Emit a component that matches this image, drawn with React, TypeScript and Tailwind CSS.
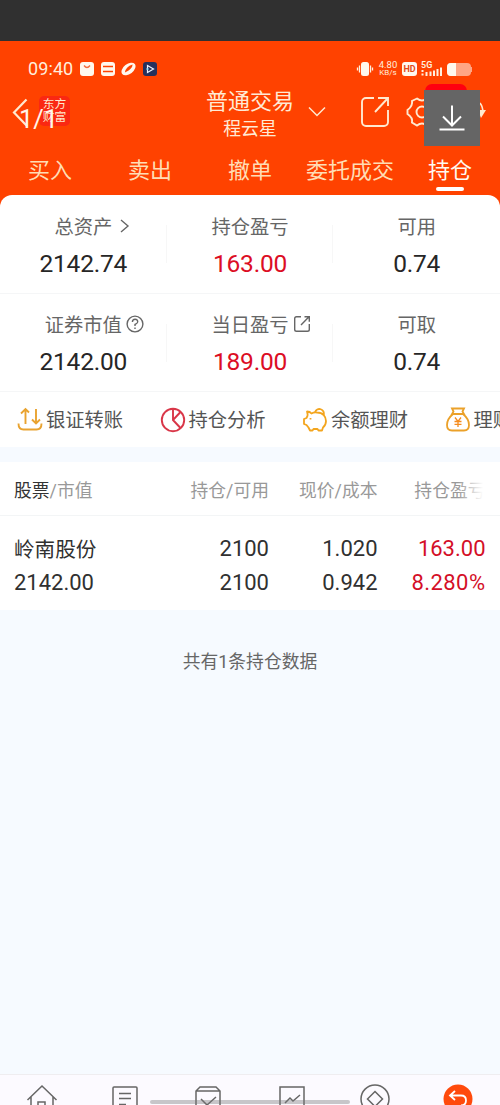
import React from "react";

const cream = "#ffe9cf";

function StatusBar() {
  return (
    <div className="flex h-[56px] items-center pl-[28px] pr-[28px] text-[#ffeedd]">
      <span className="w-[52px] text-[18px] leading-[20px] tracking-[0.1px]">09:40</span>
      <svg width="78" height="16" viewBox="0 0 78 16" fill="none">
        <rect x="0" y="1" width="14" height="14" rx="3" fill="#fff8ee" />
        <path d="M4 4.500q3 4 6 0" stroke="#f26a3d" strokeWidth="1.300" />
        <rect x="21" y="1" width="14" height="14" rx="3" fill="#fff8ee" />
        <path d="M23 5.500h10M23 10.500h10" stroke="#ff4200" strokeWidth="1.300" />
        <g transform="rotate(-38 48.500 8)">
          <ellipse cx="48.500" cy="8" rx="8" ry="5" fill="#fff8ee" />
          <path d="M43.500 8.500q4-4 11-1.500q-3 3.500-11 1.500z" fill="#ff4200" />
        </g>
        <rect x="63" y="1" width="14" height="14" rx="3" fill="#26305c" />
        <path d="M67.500 4.500l6 3.500-6 3.500z" stroke="#eef3ff" strokeWidth="1.200" />
        <path d="M66 8h3" stroke="#65c8e8" />
      </svg>
      <div className="flex-1" />
      <svg width="18" height="16" viewBox="0 0 18 16">
        <rect x="5" y="1" width="8" height="14" rx="2.500" fill="#fff8ee" />
        <path d="M3.500 4.500v7M14.500 4.500v7M1.500 6.500v3M16.500 6.500v3" stroke="#fff0df" strokeWidth="1.300" />
      </svg>
      <div className="ml-[4px] w-[20px] text-center text-[9.500px] leading-[8px]">
        <div className="whitespace-nowrap">4.80</div>
        <div className="whitespace-nowrap text-[8px]">KB/s</div>
      </div>
      <div className="ml-[4px] h-[14px] w-[15px] rounded-[3px] bg-[#fff8ee] text-center text-[9px] font-bold leading-[14px] text-[#e24a18]">
        HD
      </div>
      <svg className="ml-[4px]" width="22" height="16" viewBox="0 0 22 16">
        <text x="0" y="7" fontSize="9" fontWeight="600" fill="#fff0df">5G</text>
        <path d="M1.500 9v2M1.500 12.500v2M5.500 11v4M9.500 10.500v4.500M13 9.500v5.500M16.500 8v7M20 6.500v8.500" stroke="#fff0df" strokeWidth="2" />
      </svg>
      <div className="ml-[4px] flex h-[13px] w-[24px] overflow-hidden rounded-[4px] bg-[#ffa584]">
        <div className="w-[9px] bg-[#fff8ee]" />
      </div>
      <div className="h-[5px] w-[1px] bg-[#ffa584]" />
    </div>
  );
}

function TitleBar() {
  return (
    <div className="relative flex h-[53px] pl-[12px]">
      <svg className="mt-px" width="18" height="30" viewBox="0 0 18 30" fill="none">
        <path d="M14.500 1.500L2 14.500 15 28" stroke={cream} strokeWidth="2.200" />
      </svg>
      <div className="ml-[9px] -mt-px h-[30px] w-[31px] rounded-[5px] bg-[#fa2812] pt-[2px] text-center text-[11.800px] leading-[13px] text-[#ffe9cf]">
        <div>东方</div>
        <div>财富</div>
      </div>
      <div className="absolute left-[19px] top-[7px] whitespace-nowrap text-[25.500px] leading-[30px] text-[#fff5e9]">1/1</div>
      <div className="ml-[136px] w-[88px] text-center text-[#ffead5]">
        <div className="-mt-px h-[28px] whitespace-nowrap text-[22px] leading-[10px]">
          <span className="block pt-[1px]">普通交易</span>
        </div>
        <div className="text-[17.800px] leading-[10px]">程云星</div>
      </div>
      <svg className="ml-[14px] mt-[9px]" width="18" height="12" viewBox="0 0 18 12" fill="none">
        <path d="M1 1.500l8 8 8-8" stroke={cream} strokeWidth="1.500" />
      </svg>
      <svg className="ml-[34px] -mt-px" width="30" height="32" viewBox="0 0 30 32" fill="none" stroke={cream} strokeWidth="1.900">
        <path d="M14 2H6a4 4 0 00-4 4v20a4 4 0 004 4h18a4 4 0 004-4V14M15 16L28 2M18 2h10v8" />
      </svg>
      <svg className="ml-[15px] -mt-px" width="34" height="34" viewBox="0 0 34 34" fill="none" stroke={cream} strokeWidth="1.900">
        <path d="M12 2.500q5 4 10 0l5 2q0 6 5 8v6q-5 2-5 8l-5 3q-5-4-10 0l-5-3q1-5-4.500-8.500v-4Q8 10 7 5z" />
        <circle cx="17" cy="16" r="5.500" />
      </svg>
      <svg className="absolute left-[476px] top-[3px]" width="12" height="28" viewBox="0 0 12 28" fill="none">
        <path d="M4 3q3 4 3 10" stroke={cream} strokeWidth="1.600" />
        <path d="M2 10h8l-5 8z" fill={cream} />
      </svg>
      <div className="absolute left-[425px] top-[-13px] h-[16px] w-[42px] rounded-[7px] bg-[#ff0010]" />
      <div className="absolute left-[424px] top-[-7px] flex h-[56px] w-[56px] items-center justify-center bg-[#656565]">
        <svg width="28" height="28" viewBox="0 0 28 28" fill="none" stroke="#fff" strokeWidth="2">
          <path d="M14 1.500v20M5 12.500l9 9 9-9M1.500 25.500h25" />
        </svg>
      </div>
    </div>
  );
}

const tabs = ["买入", "卖出", "撤单", "委托成交", "持仓"];

function Tabs() {
  return (
    <div className="grid h-[45px] grid-cols-5">
      {tabs.map((t, i) => (
        <div key={t} className="flex flex-col items-center">
          <span
            className={
              i === 4
                ? "h-[37px] whitespace-nowrap text-[22px] leading-[41px] text-[#fffaf2]"
                : "h-[37px] whitespace-nowrap text-[22px] leading-[41px] text-[#ffddb5]"
            }
          >
            {t}
          </span>
          {i === 4 && <span className="h-[4px] w-[28px] rounded-full bg-white" />}
        </div>
      ))}
    </div>
  );
}

type StatProps = { label: string; value: string; red?: boolean; icon?: React.ReactNode };

function Stat({ label, value, red, icon }: StatProps) {
  return (
    <div className="flex flex-col items-center">
      <div className="relative h-[28px] whitespace-nowrap pt-[2px] text-[19.300px] leading-[28px] text-[#666]">
        {label}
        {icon && <div className="absolute left-full top-0 flex h-[28px] items-center">{icon}</div>}
      </div>
      <div className={red ? "mt-[9px] text-[24.500px] leading-[30px] tracking-[-0.2px] text-[#dc0d24]" : "mt-[9px] text-[24.500px] leading-[30px] tracking-[-0.2px] text-[#262626]"}>
        {value}
      </div>
    </div>
  );
}

const chevron = (
  <svg className="ml-[7px]" width="12" height="16" viewBox="0 0 12 16" fill="none" stroke="#666" strokeWidth="1.400">
    <path d="M2 2l7 6-7 6" />
  </svg>
);
const question = (
  <svg className="ml-[4px]" width="18" height="18" viewBox="0 0 18 18" fill="none" stroke="#666" strokeWidth="1.400">
    <circle cx="9" cy="9" r="7.900" />
    <path d="M6.400 7q0-2.800 2.700-2.800T11.700 7Q11.500 8.300 9 9.500v1.500M9 12.500v1.500" />
  </svg>
);
const share = (
  <svg className="ml-[4px]" width="18" height="18" viewBox="0 0 18 18" fill="none" stroke="#666" strokeWidth="1.400">
    <path d="M8 1.700H3.500A1.800 1.800 0 001.700 3.500v11a1.800 1.800 0 001.800 1.800h11a1.800 1.800 0 001.800-1.800V9M8 10l8-8.300M11.500 1.700h4.800v5" />
  </svg>
);

function Row({ children }: { children: React.ReactNode }) {
  return <div className="grid grid-cols-3 border-b border-[#f5f6f7]">{children}</div>;
}

function Divider() {
  return <div className="absolute right-0 top-[30px] h-[38px] w-px bg-[#f7f7f7]" />;
}

const transferIcon = (
  <svg width="26" height="26" viewBox="0 0 26 26" fill="none" stroke="#e9a330" strokeWidth="1.900">
    <path d="M8.500 17V2M4 6.500L8.500 2 12 5.500M19 2v14.500M15 12.500l4 4 4-4M1.500 16.500q0 6 5 6h13q5 0 5-6" />
  </svg>
);
const pieIcon = (
  <svg width="26" height="26" viewBox="0 0 26 26" fill="none" stroke="#d93648" strokeWidth="1.900">
    <circle cx="13" cy="13" r="11.200" />
    <path d="M13 2v11l7.500 8M13 13l7.500-8" />
  </svg>
);
const pigIcon = (
  <svg width="26" height="26" viewBox="0 0 26 26" fill="none" stroke="#f3a51e" strokeWidth="1.800">
    <path d="M5 4.500q3 0 4.500 2Q12 5 15 5.500c6 0 9 4 9 8.500q0 4-3 6.500l-1 3h-3.500l-1-1.500h-4l-1 1.500H8l-1.500-3L4.500 18 2 17v-5l2.500-1Q6.500 8 5 4.500z" strokeLinejoin="round" />
    <path d="M13 5.200a4.500 4.500 0 018.700 2.800" />
    <path d="M8.500 11v1.500" />
  </svg>
);
const bagIcon = (
  <svg width="26" height="26" viewBox="0 0 26 26" fill="none" stroke="#eba12a" strokeWidth="1.800">
    <path d="M7 1.500h12l-1.500 3L19 7H7l1.500-2.500zM8 7Q2 12 2 18q0 5.500 5 5.500h12q5 0 5-5.500 0-6-6-11" />
    <path d="M10 10.500l3 4 3-4M13 14.500V20M9.500 14.500h7M9.500 17.300h7" strokeWidth="1.300" stroke="#f58c1d" />
  </svg>
);

const actions = [
  { icon: transferIcon, label: "银证转账" },
  { icon: pieIcon, label: "持仓分析" },
  { icon: pigIcon, label: "余额理财" },
  { icon: bagIcon, label: "理财" },
];

const cols = "grid grid-cols-[126px_129px_108.500px_108px]";

function Holdings() {
  return (
    <div className="mt-[15px] bg-white">
      <div className="relative h-[54px] overflow-hidden border-b border-[#f3f5f6] pl-[14px] text-[17.800px] leading-[57px] text-[#999]">
        <div className={cols + " whitespace-nowrap text-right"}>
          <span className="text-left"><span className="text-[#333]">股票</span>/市值</span>
          <span>持仓/可用</span>
          <span>现价/成本</span>
          <span>持仓盈亏</span>
        </div>
        <div className="absolute right-0 top-0 h-[52px] w-[42px] bg-linear-to-r from-white/0 to-white to-60%" />
      </div>
      <div className="flex h-[94px] flex-col pl-[14px] pt-[16px] text-[22px] leading-[34px] text-[#303030]">
        <div className={cols + " h-[34px] text-right"}>
          <span className="pt-px text-left text-[20.600px]">岭南股份</span>
          <span>2100</span>
          <span>1.020</span>
          <span className="text-[#d40f27]">163.00</span>
        </div>
        <div className={cols + " h-[34px] text-right"}>
          <span className="text-left">2142.00</span>
          <span>2100</span>
          <span>0.942</span>
          <span className="tracking-[0.450px] text-[#d40f27]">8.280%</span>
        </div>
      </div>
    </div>
  );
}

function BottomNav() {
  return (
    <div className="relative h-[31px] overflow-hidden border-t border-[#efedf0] bg-[#fcfaff]">
      <div className="grid grid-cols-6 justify-items-center pt-[9px]">
        <svg width="32" height="32" viewBox="0 0 32 32" fill="none" stroke="#666" strokeWidth="1.500">
          <path d="M1.500 16L16 2l14.500 14M5 13v17h22V13M12 30V18h7v12" />
        </svg>
        <svg width="32" height="32" viewBox="0 0 32 32" fill="none" stroke="#666" strokeWidth="1.500">
          <rect x="4" y="3" width="24" height="26" rx="1" />
          <path d="M10 9.500h12M10 14.500h12M10 20.500h7" />
        </svg>
        <svg width="32" height="32" viewBox="0 0 32 32" fill="none" stroke="#666" strokeWidth="1.500">
          <path d="M4 30V7l4-4h16l4 4v23zM4 7h24M9 15l6 6 9-8" />
        </svg>
        <svg width="32" height="32" viewBox="0 0 32 32" fill="none" stroke="#666" strokeWidth="1.500">
          <rect x="4" y="3" width="24" height="26" />
          <path d="M9 19l5-5 3 3 7-6" />
        </svg>
        <svg width="32" height="32" viewBox="0 0 32 32" fill="none" stroke="#666" strokeWidth="1.500">
          <circle cx="16" cy="15" r="14" />
          <path d="M16 7.500l7.500 7.500-7.500 7.500L8.500 15z" />
        </svg>
        <svg width="32" height="32" viewBox="0 0 32 32" fill="none">
          <circle cx="16" cy="15" r="14.500" fill="#ff4a0c" />
          <path d="M13 7l-5 4.500 5 4.500M8.500 11.500H19q5 0 5 5t-5 5" stroke="#fff" strokeWidth="1.800" />
        </svg>
      </div>
      <div className="absolute left-[150px] top-[25px] h-[4px] w-[200px] rounded-full bg-[#77777766]" />
    </div>
  );
}

export default function App() {
  return (
    <div className="flex h-[1105px] w-[500px] flex-col overflow-hidden bg-[#f6faff] font-['Roboto','Noto_Sans_CJK_SC',sans-serif]">
      <div className="h-[41px] shrink-0 bg-[#303030]" />
      <div className="bg-[#ff4200]">
        <StatusBar />
        <TitleBar />
        <Tabs />
        <div className="h-[252px] overflow-hidden rounded-t-[12px] bg-white">
          <Row>
            <div className="relative h-[98px] pt-[17px]"><Stat label="总资产" value="2142.74" icon={chevron} /><Divider /></div>
            <div className="relative pt-[17px]"><Stat label="持仓盈亏" value="163.00" red /><Divider /></div>
            <div className="pt-[17px]"><Stat label="可用" value="0.74" /></div>
          </Row>
          <Row>
            <div className="relative h-[97px] pt-[16px]"><Stat label="证券市值" value="2142.00" icon={question} /><Divider /></div>
            <div className="relative pt-[16px]"><Stat label="当日盈亏" value="189.00" red icon={share} /><Divider /></div>
            <div className="pt-[16px]"><Stat label="可取" value="0.74" /></div>
          </Row>
          <div className="flex h-[55px] w-[560px] items-center pl-[17px] text-[19.300px] leading-[28px] text-[#555]">
            {actions.map((a) => (
              <div key={a.label} className="flex w-[142.500px] shrink-0 items-center gap-[3px] whitespace-nowrap">
                {a.icon}
                <span className="pt-[2px]">{a.label}</span>
              </div>
            ))}
          </div>
        </div>
      </div>
      <Holdings />
      <div className="mt-[37px] text-center text-[17.800px] leading-[30px] text-[#666]">共有1条持仓数据</div>
      <div className="flex-1" />
      <BottomNav />
    </div>
  );
}
